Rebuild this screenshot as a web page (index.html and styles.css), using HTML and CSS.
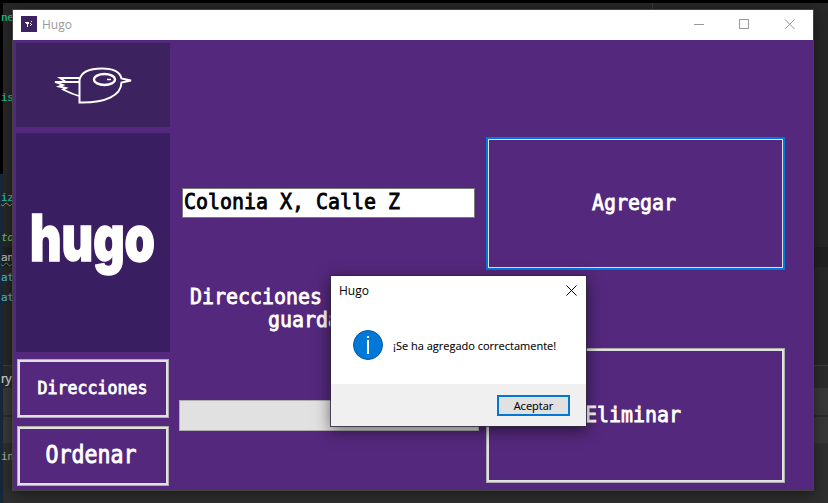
FILE: index.html
```html
<!DOCTYPE html>
<html lang="es">
<head>
<meta charset="utf-8">
<title>Hugo</title>
<link rel="stylesheet" href="styles.css">
</head>
<body>
<div class="desktop">
  <div class="editor">
    <i class="topbar"></i><i class="leftbar"></i><i class="leftbar blue"></i><i class="tabline"></i>
    <i class="activeline"></i><i class="panel p1"></i><i class="panel p2"></i><i class="panel p3"></i><i class="panel p4"></i>
    <span class="code c1">ne</span>
    <span class="code c2">is</span>
    <span class="code c3">iz</span>
    <span class="code c4">to</span>
    <span class="code c5">an</span>
    <span class="code c6">at</span>
    <span class="code c7">at</span>
    <span class="code c8">ry</span>
    <span class="code c9">in</span>
  </div>

  <section class="window">
    <header class="titlebar">
      <svg class="appicon" viewBox="0 0 16 16" shape-rendering="crispEdges"><rect width="16" height="16" fill="#3c225e"/><path d="M4 6h3v1H4zM5 7h2v1H5zM6 8h1v3H6zM7 6h1v2H7zM10 5h1v1h-1zM9 7h1v1H9zM10 8h1v1h-1zM9 9h1v1H9z" fill="#fff"/></svg>
      <span class="title">Hugo</span>
      <svg class="controls" viewBox="0 0 101 11" fill="none" stroke="#999"><path d="M0 5.500h10" shape-rendering="crispEdges"/><path d="M45.500.5h9v9h-9z" shape-rendering="crispEdges"/><path d="M91 .5l9.500 9.500M100.500 .5L91 10"/></svg>
    </header>
    <div class="content">
      <aside class="sidebar">
        <div class="bird">
          <svg viewBox="0 0 154 84" fill="none" stroke="#fff" stroke-width="2" stroke-linejoin="miter">
            <path d="M63.500 59.500V37C65 29 74 25.500 86 25.500C97 25.500 104 29 105.500 35.500L115 37.500L105.500 39.500C105 52 91 60 63.500 59.500Z"/>
            <ellipse cx="88.500" cy="36.500" rx="10.500" ry="5.500" stroke-width="2.300"/>
            <path d="M91 36.500h4" stroke-width="1.500"/>
            <path d="M63 35H44L50 39M63 39H39L47 42L43 43.500L50 45L47 46.500C52 49 56 51 63 53" stroke-width="1.800"/>
          </svg>
        </div>
        <div class="brand">
          <svg viewBox="0 0 154 219"><text class="wordmark" x="14" y="128" textLength="125" lengthAdjust="spacingAndGlyphs">hugo</text></svg>
        </div>
        <button class="btn side"><span class="mono small">Direcciones</span></button>
        <button class="btn side second"><span class="mono large">Ordenar</span></button>
      </aside>
      <main class="form">
        <div class="field"><span class="mono">Colonia X, Calle Z</span></div>
        <div class="caption"><span class="mono">Direcciones</span><span class="mono indent">guarda</span></div>
        <div class="combo"></div>
      </main>
      <div class="actions">
        <button class="btn add"><span class="mono">Agregar</span></button>
        <button class="btn remove"><span class="mono">Eliminar</span></button>
      </div>
    </div>
  </section>

  <section class="dialog">
    <header class="dialog-head"><span>Hugo</span><svg viewBox="0 0 11 11" stroke="#000" fill="none"><path d="M.5.5l10 10M10.500 .5l-10 10"/></svg></header>
    <div class="dialog-body">
      <svg viewBox="0 0 30 30"><circle cx="15" cy="15" r="14.500" fill="#0078d7" stroke="#04599c"/><path d="M14 6h2v2h-2zM14 10h2v14h-2z" fill="#fff"/></svg>
      <span class="message">¡Se ha agregado correctamente!</span>
    </div>
    <footer class="dialog-foot"><button class="accept"><span>Aceptar</span></button></footer>
  </section>
</div>
</body>
</html>
```
FILE: styles.css
```css
* { box-sizing: border-box; }
body { margin: 0; overflow: hidden; }
button { margin: 0; padding: 0; font: inherit; border-radius: 0; }
svg { display: block; }

.desktop { position: relative; width: 828px; height: 503px; background: #272727; overflow: hidden; }

.editor i, .code { position: absolute; }
.topbar { left: 0; top: 0; width: 828px; height: 3px; background: #000; }
.leftbar { left: 0; top: 0; width: 3px; height: 174px; background: #000; }
.leftbar.blue { top: 174px; height: 329px; background: #17283b; }
.tabline { left: 652px; top: 3px; width: 1px; height: 7px; background: #3c3c3c; }
.activeline { left: 3px; right: 0; top: 247px; height: 20px; background: #202020; }
.panel { left: 3px; right: 0; }
.p1 { top: 365px; height: 23px; background: #2b2b2b; border-top: 1px solid #3e3e3e; }
.p2 { top: 388px; height: 27px; background: #383838; }
.p3 { top: 415px; height: 28px; background: #383838; border-top: 2px solid #2b2b2b; }
.p4 { top: 443px; height: 60px; background: #2f2f2f; }
.code { left: 1px; font: 11px/16px "DejaVu Sans Mono", monospace; letter-spacing: -.3px; -webkit-text-stroke: .2px currentColor; }
.c1 { top: 10px; color: #22c08f; }
.c2 { top: 90px; color: #22c08f; }
.c3 { top: 190px; color: #22c5b0; text-decoration: underline wavy #a89a55 1px; }
.c4 { top: 230px; color: #6fb05a; font-style: italic; }
.c5 { top: 250px; color: #b5b5b5; text-decoration: underline wavy #5c8a42 1px; }
.c6 { top: 270px; color: #4fb0c8; }
.c7 { top: 290px; color: #4fb0c8; }
.c8 { top: 371px; color: #ddd; font-family: "Open Sans", sans-serif; font-size: 12px; }
.c9 { top: 449px; color: #a9a68f; }

.window { position: absolute; left: 12px; top: 9px; width: 802px; height: 482px; border: 1px solid #434343; background: #54287c; box-shadow: 0 3px 12px rgba(0,0,0,.45); }
.titlebar { display: flex; align-items: center; height: 30px; padding: 0 18px 2px 8px; background: #fff; }
.appicon { width: 16px; height: 16px; }
.title { flex: 1; margin: 2px 0 0 5px; font: 12px/16px "Open Sans", sans-serif; color: #999; }
.controls { width: 101px; height: 11px; }
.content { display: grid; grid-template-columns: 160px 310px 330px; height: 450px; }

.sidebar { display: flex; flex-direction: column; align-items: flex-start; padding: 3px 0 0 3px; }
.bird { width: 154px; height: 84px; background: #3c225e; }
.brand { width: 154px; height: 219px; margin-top: 6px; background: #391e61; }
.wordmark { font: 900 64px Inter, sans-serif; fill: #fff; stroke: #fff; stroke-width: 1.500px; }

.btn { display: flex; align-items: center; justify-content: center; background: #54287c; color: #fff; border: 1px solid #adadad; box-shadow: inset 0 0 0 2px #e1e1e1; }
.side { width: 152px; height: 59px; margin: 7px 0 0 1px; padding-right: 1px; }
.side.second { height: 60px; margin-top: 8px; padding: 0 4px 4px 0; }

.mono { display: inline-block; font: 19.930px/23px "DejaVu Sans Mono", monospace; -webkit-text-stroke: .8px currentColor; transform: scaleY(1.06); white-space: pre; }
.small { font-size: 16.610px; }
.large { font-size: 21.590px; transform: scaleY(1.12); }

.form { display: flex; flex-direction: column; padding: 148px 0 0 6px; }
.field { width: 293px; height: 30px; margin-left: 3px; padding: 2px 0 0 1px; border: 1px solid #7a7a7a; background: #fff; color: #000; }
.caption { display: flex; flex-direction: column; align-items: flex-start; margin: 68px 0 0 11px; color: #fff; }
.indent { margin-left: 78px; }
.combo { width: 300px; height: 31px; margin-top: 68px; background: #e1e1e1; border: 1px solid #adadad; }

.actions { display: flex; flex-direction: column; padding: 97px 0 0 3px; }
.add { width: 299px; height: 133px; border: 2px solid #0078d7; box-shadow: inset 0 0 0 1px #e1e1e1; padding-right: 3px; }
.remove { width: 299px; height: 135px; margin-top: 78px; padding-right: 5px; }

.dialog { position: absolute; left: 330px; top: 275px; width: 257px; height: 152px; display: flex; flex-direction: column; border: 1px solid rgba(50,40,60,.8); background: #fff; background-clip: padding-box; box-shadow: 0 4px 14px rgba(0,0,0,.5); font: 12px/16px "Open Sans", sans-serif; color: #000; }
.dialog-head { display: flex; justify-content: space-between; align-items: center; height: 28px; padding: 2px 9px 0 8px; }
.dialog-head svg { width: 11px; height: 11px; margin-top: -2px; }
.dialog-body { flex: 1; display: flex; align-items: center; padding: 1px 0 0 22px; }
.dialog-body svg { width: 30px; height: 30px; }
.message { margin: 2px 0 0 10px; font-size: 11px; white-space: nowrap; -webkit-text-stroke: .1px #000; }
.dialog-foot { display: flex; justify-content: flex-end; height: 42px; padding: 11px 16px 0 0; background: #f0f0f0; }
.accept { width: 73px; height: 21px; display: flex; align-items: center; justify-content: center; border: 2px solid #0078d7; background: #e1e1e1; color: #000; font-size: 11px; -webkit-text-stroke: .1px #000; }
```
